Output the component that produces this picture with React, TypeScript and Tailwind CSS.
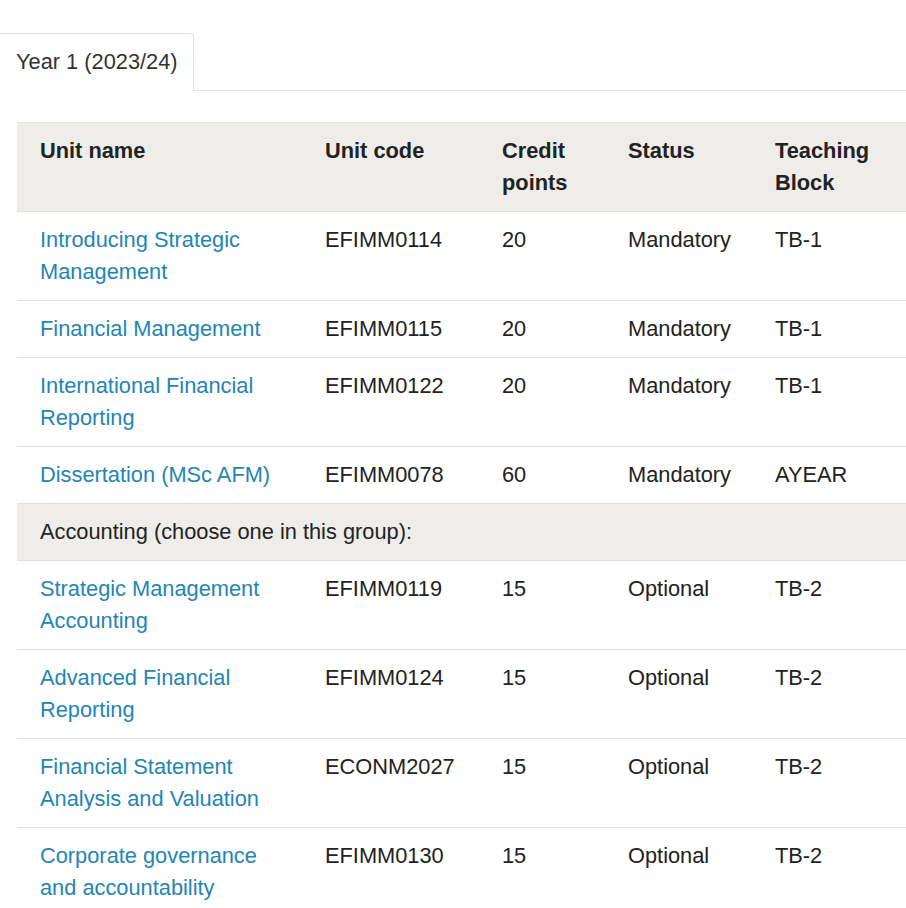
const units = [
  { name: "Introducing Strategic Management", code: "EFIMM0114", credits: "20", status: "Mandatory", block: "TB-1" },
  { name: "Financial Management", code: "EFIMM0115", credits: "20", status: "Mandatory", block: "TB-1" },
  { name: "International Financial Reporting", code: "EFIMM0122", credits: "20", status: "Mandatory", block: "TB-1" },
  { name: "Dissertation (MSc AFM)", code: "EFIMM0078", credits: "60", status: "Mandatory", block: "AYEAR" },
];

const accounting = [
  { name: "Strategic Management Accounting", code: "EFIMM0119", credits: "15", status: "Optional", block: "TB-2" },
  { name: "Advanced Financial Reporting", code: "EFIMM0124", credits: "15", status: "Optional", block: "TB-2" },
  { name: "Financial Statement Analysis and Valuation", code: "ECONM2027", credits: "15", status: "Optional", block: "TB-2" },
  { name: "Corporate governance and accountability", code: "EFIMM0130", credits: "15", status: "Optional", block: "TB-2" },
];

type Unit = (typeof units)[number];

function UnitRow({ unit }: { unit: Unit }) {
  return (
    <tr className="border-t border-[#e3e1dc] align-top">
      <td className="pl-[23px] pr-5 py-3">
        <a href="#" className="text-[#2385b5] no-underline">
          {unit.name}
        </a>
      </td>
      <td className="pl-[23px] py-3">{unit.code}</td>
      <td className="pl-[23px] py-3">{unit.credits}</td>
      <td className="pl-[23px] py-3">{unit.status}</td>
      <td className="pl-[23px] py-3">{unit.block}</td>
    </tr>
  );
}

export default function App() {
  return (
    <div
      className="w-[906px] h-[908px] overflow-hidden bg-white text-[21.8px] leading-[32px] text-[#222]"
      style={{ fontFamily: '"Liberation Sans", Arial, sans-serif' }}
    >
      <div className="pt-[33px] flex">
        <div className="-ml-px h-[58px] w-[195px] border border-b-0 border-[#e3e1dc] rounded-tr-[4px] pl-[16px] pt-[12px] text-[#333]">
          Year 1 (2023/24)
        </div>
        <div className="flex-1 border-b border-[#e3e1dc]" />
      </div>

      <div className="pl-[17px] pt-[31px]">
        <table className="border-collapse table-fixed w-[1000px] text-left">
          <colgroup>
            <col className="w-[285px]" />
            <col className="w-[177px]" />
            <col className="w-[126px]" />
            <col className="w-[147px]" />
            <col className="w-[265px]" />
          </colgroup>
          <thead>
            <tr className="bg-[#eeedea] border-t border-b border-[#e3e1dc] align-top">
              <th className="pl-[23px] py-3 font-bold">Unit name</th>
              <th className="pl-[23px] py-3 font-bold">Unit code</th>
              <th className="pl-[23px] py-3 font-bold">
                Credit
                <br />
                points
              </th>
              <th className="pl-[23px] py-3 font-bold">Status</th>
              <th className="pl-[23px] py-3 font-bold">
                Teaching
                <br />
                Block
              </th>
            </tr>
          </thead>
          <tbody>
            {units.map((u) => (
              <UnitRow key={u.code} unit={u} />
            ))}
            <tr className="bg-[#eeedea] border-t border-[#e3e1dc]">
              <td colSpan={5} className="pl-[23px] py-3">
                Accounting (choose one in this group):
              </td>
            </tr>
            {accounting.map((u) => (
              <UnitRow key={u.code} unit={u} />
            ))}
          </tbody>
        </table>
      </div>
    </div>
  );
}
